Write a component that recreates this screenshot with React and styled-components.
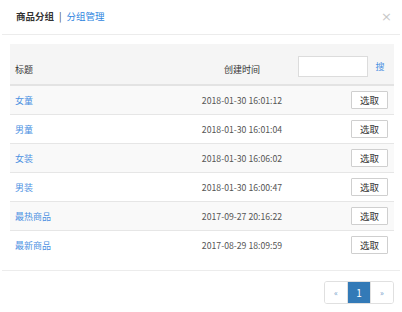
import React from "react";
import styled, { createGlobalStyle } from "styled-components";

const GlobalStyle = createGlobalStyle`
  html, body {
    margin: 0;
    padding: 0;
    background: #fff;
  }
  body {
    font-family: "Noto Sans CJK SC", "DejaVu Sans", sans-serif;
    font-size: 9px;
    color: #333;
  }
`;

const Modal = styled.div`
  width: 398px;
  margin: 0 2px;
`;

const Header = styled.header`
  height: 35px;
  display: flex;
  align-items: center;
  justify-content: space-between;
  padding: 0 8px 2px 14px;
  border-bottom: 1px solid #ececec;
  box-sizing: border-box;
`;

const Title = styled.h4`
  margin: 0;
  font-size: 9.5px;
  font-weight: bold;
  color: #333;
  display: flex;
  align-items: center;
  gap: 5px;
`;

const Divider = styled.span`
  font-weight: normal;
  color: #333;
`;

const TitleLink = styled.a`
  color: #2f86e0;
  font-weight: normal;
  text-decoration: none;
`;

const Close = styled.span`
  color: #c8c8c8;
  font-size: 13px;
  line-height: 1;
  font-family: "DejaVu Sans", sans-serif;
`;

const Body = styled.section`
  padding: 9px 6px 10px 8px;
  border-bottom: 1px solid #ececec;
`;

const Row = styled.div`
  display: grid;
  grid-template-columns: 1fr 96px 104px;
  align-items: center;
  height: 29px;
  box-sizing: border-box;
  border-bottom: 1px solid #e6e6e6;
  background: ${(p) => (p.$striped ? "#f9f9f9" : "#fff")};
  &:last-child {
    border-bottom-color: #fff;
  }
`;

const HeadRow = styled.div`
  display: grid;
  grid-template-columns: 1fr 96px 104px;
  align-items: end;
  height: 42px;
  box-sizing: border-box;
  background: #f5f5f5;
  border-bottom: 2px solid #e3e3e3;
`;

const Th = styled.div`
  padding: 0 5px 8px;
  color: #333;
  text-align: ${(p) => p.$align || "left"};
`;

const SearchCell = styled.div`
  display: flex;
  justify-content: flex-end;
  padding-bottom: 7px;
  align-self: end;
`;

const SearchInput = styled.input`
  width: 70px;
  height: 21px;
  box-sizing: border-box;
  border: 1px solid #dcdcdc;
  background: #fff;
  outline: none;
  padding: 0 4px;
`;

const SearchButton = styled.button`
  width: 26px;
  height: 21px;
  box-sizing: border-box;
  border: none;
  background: #f5f5f5;
  color: #4a90e2;
  font-family: inherit;
  font-size: 9px;
  padding: 0 2px 0 0;
`;

const Cell = styled.div`
  padding: 0 5px;
  text-align: ${(p) => p.$align || "left"};
`;

const NameLink = styled.a`
  color: #4a90e2;
  text-decoration: none;
`;

const DateText = styled.span`
  color: #555;
  font-size: 8.7px;
  white-space: nowrap;
`;

const PickButton = styled.button`
  width: 37px;
  height: 18px;
  box-sizing: border-box;
  margin-right: 1px;
  border: 1px solid #cfcfcf;
  border-radius: 1px;
  background: #fff;
  color: #333;
  font-family: inherit;
  font-size: 9.5px;
  padding: 0;
`;

const Footer = styled.footer`
  display: flex;
  justify-content: flex-end;
  padding: 10px 6px 0 0;
`;

const Pager = styled.ul`
  display: flex;
  list-style: none;
  margin: 0;
  padding: 0;
  border: 1px solid #e0e0e0;
  border-radius: 3px;
  overflow: hidden;
`;

const PageItem = styled.li`
  width: 22px;
  height: 21px;
  display: flex;
  align-items: center;
  justify-content: center;
  font-size: ${(p) => (p.$active ? "10px" : "8px")};
  background: ${(p) => (p.$active ? "#337ab7" : "#fff")};
  color: ${(p) => (p.$active ? "#fff" : "#6f9bc8")};
  & + & {
    border-left: 1px solid #e0e0e0;
  }
`;

const groups = [
  { name: "女童", date: "2018-01-30 16:01:12" },
  { name: "男童", date: "2018-01-30 16:01:04" },
  { name: "女装", date: "2018-01-30 16:06:02" },
  { name: "男装", date: "2018-01-30 16:00:47" },
  { name: "最热商品", date: "2017-09-27 20:16:22" },
  { name: "最新商品", date: "2017-08-29 18:09:59" },
];

const App = () => {
  return (
    <Modal>
      <GlobalStyle />
      <Header>
        <Title>
          商品分组 <Divider>|</Divider>
          <TitleLink href="#">分组管理</TitleLink>
        </Title>
        <Close>×</Close>
      </Header>
      <Body>
        <HeadRow>
          <Th>标题</Th>
          <Th $align="center">创建时间</Th>
          <SearchCell>
            <SearchInput />
            <SearchButton>搜</SearchButton>
          </SearchCell>
        </HeadRow>
        {groups.map((g, i) => (
          <Row key={g.name} $striped={i % 2 === 0}>
            <Cell>
              <NameLink href="#">{g.name}</NameLink>
            </Cell>
            <Cell $align="center">
              <DateText>{g.date}</DateText>
            </Cell>
            <Cell $align="right">
              <PickButton>选取</PickButton>
            </Cell>
          </Row>
        ))}
      </Body>
      <Footer>
        <Pager>
          <PageItem>«</PageItem>
          <PageItem $active>1</PageItem>
          <PageItem>»</PageItem>
        </Pager>
      </Footer>
    </Modal>
  );
};

export default App;
